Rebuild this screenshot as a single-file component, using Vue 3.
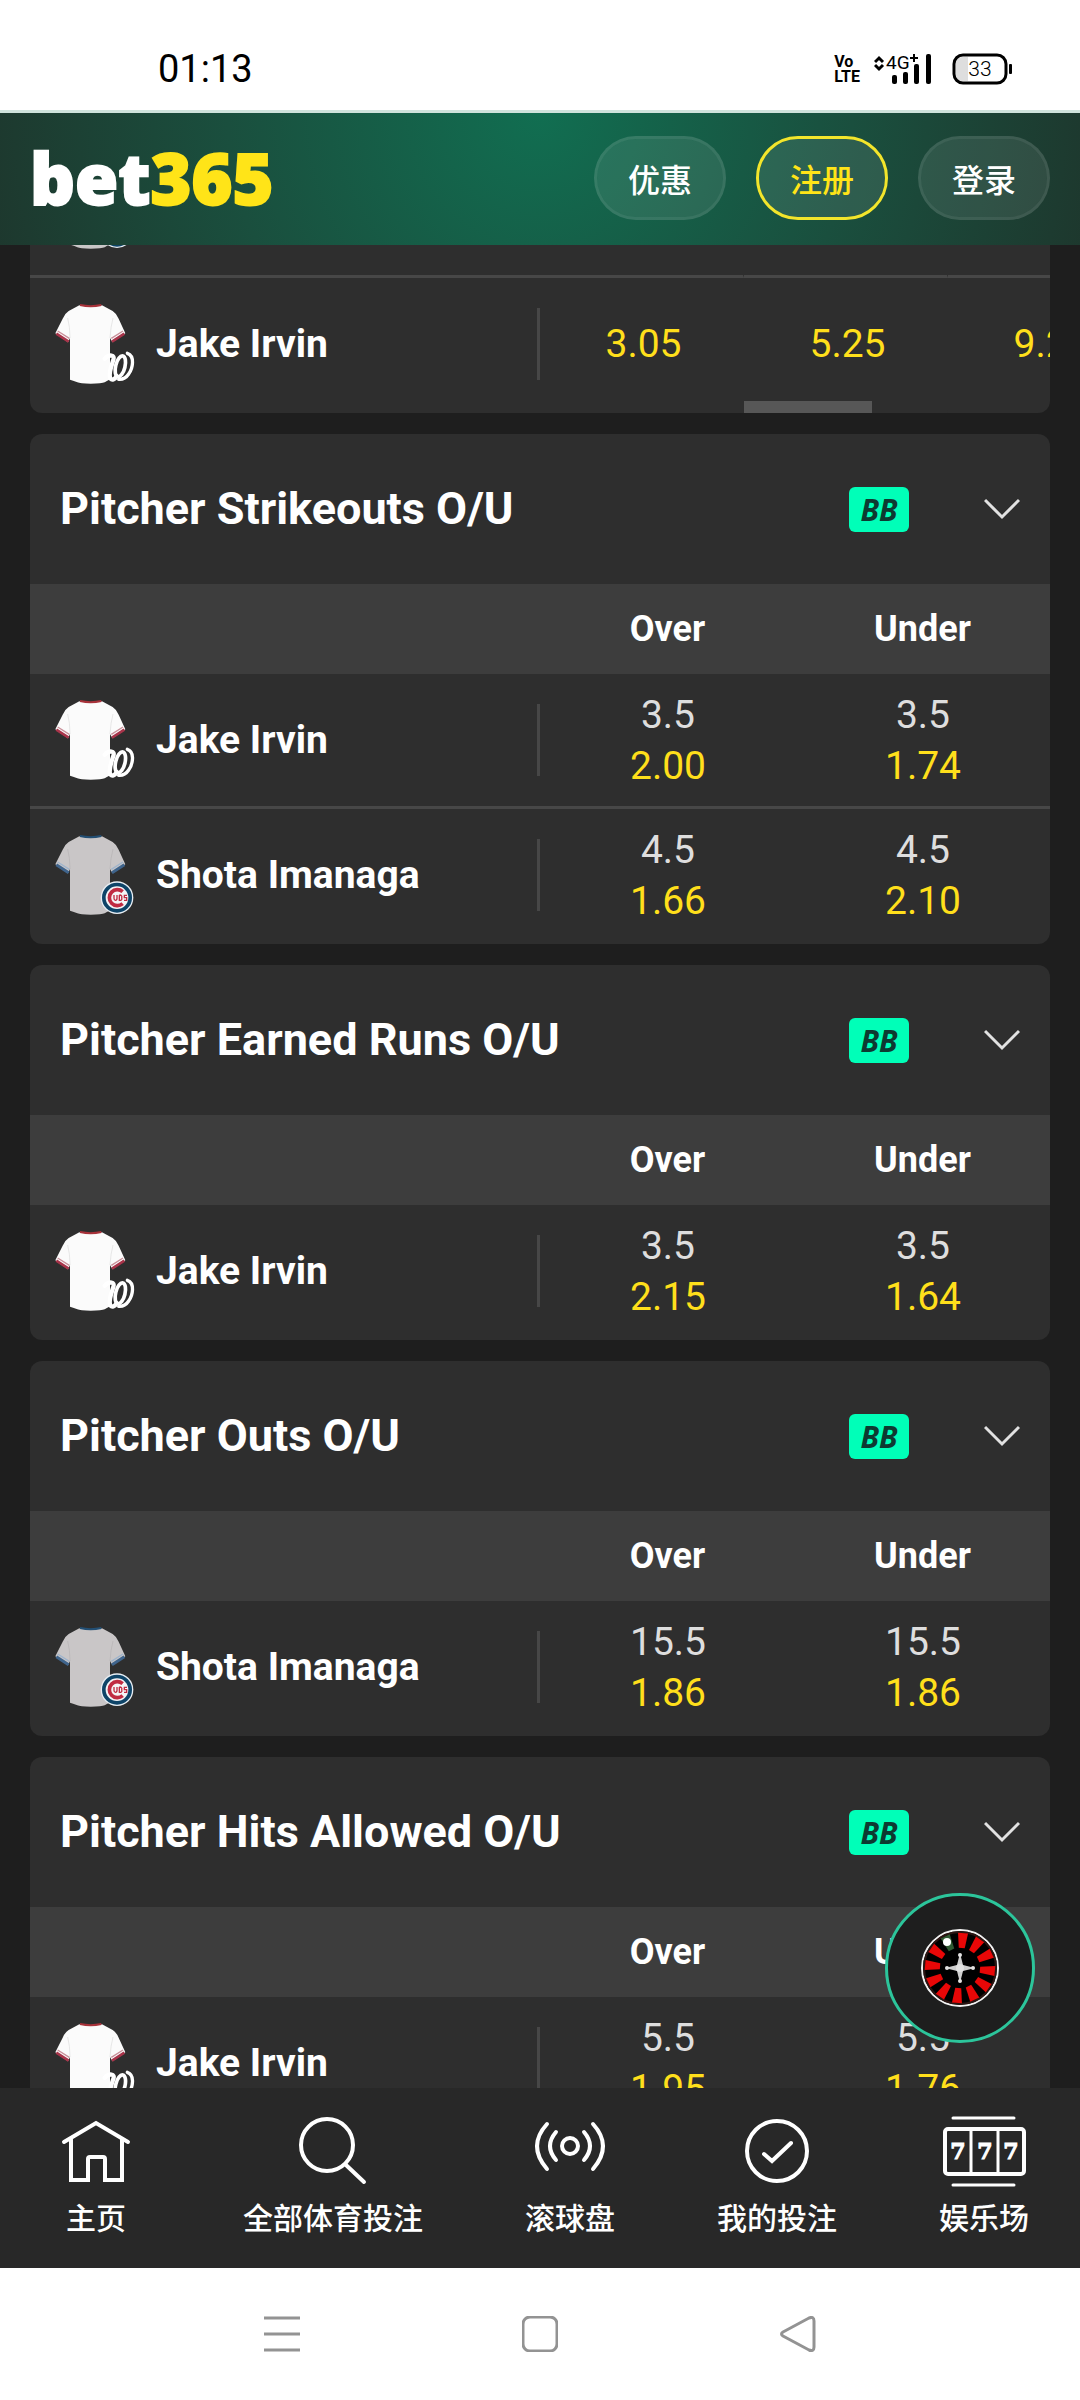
<script setup>
const markets = [
  {
    title: 'Pitcher Strikeouts O/U',
    rows: [
      { name: 'Jake Irvin', team: 'was', odds: [['3.5', '2.00'], ['3.5', '1.74']] },
      { name: 'Shota Imanaga', team: 'chc', odds: [['4.5', '1.66'], ['4.5', '2.10']] },
    ],
  },
  {
    title: 'Pitcher Earned Runs O/U',
    rows: [{ name: 'Jake Irvin', team: 'was', odds: [['3.5', '2.15'], ['3.5', '1.64']] }],
  },
  {
    title: 'Pitcher Outs O/U',
    rows: [{ name: 'Shota Imanaga', team: 'chc', odds: [['15.5', '1.86'], ['15.5', '1.86']] }],
  },
  {
    title: 'Pitcher Hits Allowed O/U',
    rows: [{ name: 'Jake Irvin', team: 'was', odds: [['5.5', '1.95'], ['5.5', '1.76']] }],
  },
]

// Upper table scrolls sideways, so its last column runs past the card edge.
// Its first row has scrolled up under the header and keeps only its kit.
const ladder = [
  { name: '', team: 'chc', odds: ['', '', ''] },
  { name: 'Jake Irvin', team: 'was', odds: ['3.05', '5.25', '9.25'] },
]

const columns = ['Over', 'Under']

const pockets = Array.from({ length: 12 }, (_, i) => i * 30 + 5)
</script>

<template>
  <div class="screen">
    <svg class="defs" width="0" height="0" aria-hidden="true">
      <defs>
        <path
          id="shirt"
          d="M82 10Q116 16 150 10L182 27Q193 34 200 50L220 94L181 121L174 108V232Q166 236 158 241Q150 245 116 245Q84 245 76 241Q66 236 54 233V108L48 121L10 94L32 50Q39 34 50 27Z"
        />
        <path id="seams" d="M47 48Q54 74 54 108M183 48Q176 74 174 108" />
        <path id="collar" d="M84 9Q116 16 148 9" />
        <path id="cuffs" d="M13 95L50 119M217 95L180 119" />
        <path id="stripes" d="M17 87L52 109M213 87L178 109" />
        <g id="was">
          <use href="#shirt" fill="#fbfbfb" />
          <use href="#seams" fill="none" stroke="#dcdcdc" stroke-width="2" />
          <use href="#collar" fill="none" stroke="#a8323a" stroke-width="6" />
          <use href="#cuffs" fill="none" stroke="#a8344a" stroke-width="8" />
          <use href="#stripes" fill="none" stroke="#c9909a" stroke-width="4" />
          <g fill="none" stroke="#fff" stroke-linecap="round">
            <path d="M158 170C172 156 190 158 184 174C178 192 170 212 174 228C180 238 190 230 194 222" stroke-width="13" />
            <ellipse cx="205" cy="193" rx="14" ry="32" transform="rotate(14 205 193)" stroke-width="11" />
            <path d="M226 154C250 162 242 200 230 216C222 228 212 233 200 232" stroke-width="10" />
          </g>
        </g>
        <g id="chc">
          <use href="#shirt" fill="#c9c6c7" />
          <use href="#seams" fill="none" stroke="#b5b2b4" stroke-width="2" />
          <use href="#collar" fill="none" stroke="#234f74" stroke-width="6" />
          <use href="#cuffs" fill="none" stroke="#3f648c" stroke-width="9" />
          <use href="#stripes" fill="none" stroke="#9fb4cc" stroke-width="4" />
          <circle cx="195" cy="194" r="49" fill="#e8eef4" />
          <circle cx="195" cy="194" r="45" fill="#0e4468" />
          <circle cx="195" cy="194" r="34" fill="#f4f4f6" />
          <path d="M212 176A24 24 0 1 0 212 212" fill="none" stroke="#c02b42" stroke-width="11" />
          <path
            d="M186 186V196Q186 202 190 202Q195 202 195 196V186M202 186V202H206Q211 201 209 194Q212 187 202 186M225 187H217V194H224V202H216"
            fill="none"
            stroke="#c02b42"
            stroke-width="4"
          />
        </g>
      </defs>
    </svg>

    <div class="status">
      <time class="clock">01:13</time>
      <div class="signals">
        <span class="volte"><span>Vo</span><span>LTE</span></span>
        <svg width="46" height="32" viewBox="0 0 46 32" role="img" aria-label="4G+">
          <g fill="none" stroke="#000" stroke-width="3">
            <path d="M1 9L5 5L9 9M1 12L5 16L9 12" />
            <path d="M36 5H44M40 1V9" stroke-width="2" />
          </g>
          <text x="12" y="16" class="net">4G</text>
          <rect x="18" y="22" width="5" height="9" rx="2" />
          <rect x="29" y="19" width="5" height="12" rx="2" />
          <rect x="40" y="11" width="5" height="20" rx="2" />
        </svg>
        <svg class="bar" width="5" height="32" viewBox="0 0 5 32" aria-hidden="true">
          <rect x="0" y="1" width="5" height="30" rx="2" />
        </svg>
        <svg width="60" height="32" viewBox="0 0 60 32" role="img" aria-label="33%">
          <path d="M10 4H16V28H10Q4 28 4 22V10Q4 4 10 4Z" fill="#dedede" />
          <rect x="2" y="2" width="52" height="28" rx="9" fill="none" stroke="#000" stroke-width="3" />
          <rect x="57" y="11" width="3" height="10" rx="1" />
          <text x="28" y="23" class="charge">33</text>
        </svg>
      </div>
    </div>

    <header class="top">
      <a href="#" class="logo">bet<span>365</span></a>
      <div class="actions">
        <button type="button" class="pill">优惠</button>
        <button type="button" class="pill join">注册</button>
        <button type="button" class="pill">登录</button>
      </div>
    </header>

    <main class="content">
      <div class="markets">
        <section class="card">
          <table class="grid ladder">
            <tbody>
              <tr v-for="(row, r) in ladder" :key="r">
                <th scope="row" class="player">
                  <svg class="kit" viewBox="0 0 252 252" aria-hidden="true"><use :href="'#' + row.team" /></svg>
                  <span>{{ row.name }}</span>
                  <i class="rule"></i>
                </th>
                <td v-for="(price, i) in row.odds" :key="i">
                  <button v-if="price" type="button" class="odd"><b>{{ price }}</b></button>
                </td>
              </tr>
            </tbody>
          </table>
          <div class="thumb"></div>
        </section>

        <section v-for="market in markets" :key="market.title" class="card">
          <div class="head">
            <h2>{{ market.title }}</h2>
            <span class="bb">BB</span>
            <button type="button" class="fold" :aria-label="market.title">
              <svg width="36" height="22" viewBox="0 0 36 22" aria-hidden="true">
                <path d="M1 2L18 19L35 2" fill="none" stroke="#e2e2e2" stroke-width="3" />
              </svg>
            </button>
          </div>
          <table class="grid">
            <thead>
              <tr>
                <td></td>
                <th v-for="c in columns" :key="c" scope="col">{{ c }}</th>
              </tr>
            </thead>
            <tbody>
              <tr v-for="row in market.rows" :key="row.name">
                <th scope="row" class="player">
                  <svg class="kit" viewBox="0 0 252 252" aria-hidden="true"><use :href="'#' + row.team" /></svg>
                  <span>{{ row.name }}</span>
                  <i class="rule"></i>
                </th>
                <td v-for="(o, i) in row.odds" :key="i">
                  <button type="button" class="odd"><span>{{ o[0] }}</span><b>{{ o[1] }}</b></button>
                </td>
              </tr>
            </tbody>
          </table>
        </section>
      </div>

      <button type="button" class="roulette" aria-label="Roulette">
        <svg width="78" height="78" viewBox="-39 -39 78 78" aria-hidden="true">
          <circle r="38" fill="#000" stroke="#f2f2f2" stroke-width="2" />
          <circle r="36" fill="none" stroke="#2b1512" stroke-width="2" />
          <path
            v-for="(a, i) in pockets"
            :key="a"
            :transform="`rotate(${a})`"
            d="M-5 -35H5L3 -20H-3Z"
            :fill="i === 11 ? '#2f5a32' : '#e80707'"
          />
          <circle cx="-13" cy="-26" r="4" fill="#fff" />
          <path d="M0 -15L3 -3L15 0L3 3L0 15L-3 3L-15 0L-3 -3Z" fill="#cfcfcf" />
          <g fill="#e2e2e2">
            <circle cy="-13" r="2" /><circle cy="13" r="2" /><circle cx="-13" r="2" /><circle cx="13" r="2" />
            <circle r="4" />
          </g>
        </svg>
      </button>
    </main>

    <nav class="tabs">
      <a href="#">
        <svg width="72" height="72" viewBox="0 0 72 72" aria-hidden="true">
          <path d="M4 27L36 8L68 27M11 24V65H28V44Q28 42 30 42H43Q45 42 45 44V65H62V24" />
        </svg>
        <span>主页</span>
      </a>
      <a href="#">
        <svg width="84" height="72" viewBox="0 0 84 72" aria-hidden="true">
          <circle cx="36" cy="30" r="26" />
          <path d="M55 50L73 67" />
        </svg>
        <span>全部体育投注</span>
      </a>
      <a href="#">
        <svg width="72" height="72" viewBox="0 0 72 72" aria-hidden="true">
          <circle cx="36" cy="31" r="8" />
          <path d="M22 17Q10 31 22 45M50 17Q62 31 50 45M13 9Q-7 31 13 54M59 9Q79 31 59 54" />
        </svg>
        <span>滚球盘</span>
      </a>
      <a href="#">
        <svg width="72" height="72" viewBox="0 0 72 72" aria-hidden="true">
          <circle cx="36" cy="36" r="30" />
          <path d="M23 39L31 46L50 28" />
        </svg>
        <span>我的投注</span>
      </a>
      <a href="#">
        <svg width="84" height="72" viewBox="0 0 84 72" aria-hidden="true">
          <rect x="3" y="14" width="79" height="45" rx="3" />
          <path d="M29 14V59M56 14V59M11 3H72M11 70H72" stroke-width="3" />
          <g class="sevens"><text x="16" y="44">7</text><text x="43" y="44">7</text><text x="69" y="44">7</text></g>
        </svg>
        <span>娱乐场</span>
      </a>
    </nav>

    <div class="system">
      <button type="button" aria-label="Recents">
        <svg width="36" height="36" viewBox="0 0 36 36"><path d="M0 2H36M0 18H36M0 34H36" /></svg>
      </button>
      <button type="button" aria-label="Home">
        <svg width="36" height="36" viewBox="0 0 36 36"><rect x="1" y="1" width="34" height="34" rx="7" /></svg>
      </button>
      <button type="button" aria-label="Back">
        <svg width="36" height="36" viewBox="0 0 36 36">
          <path d="M3 16L29 2Q34 0 34 5V31Q34 36 29 34L3 20Q0 18 3 16Z" />
        </svg>
      </button>
    </div>
  </div>
</template>

<style>
body {
  background: #1e1e1e;
}
</style>

<style scoped>
.screen {
  display: flex;
  flex-direction: column;
  height: 100vh;
  overflow: hidden;
  background: #1e1e1e;
  color: #fff;
  font-family: Roboto, "Noto Sans CJK SC", sans-serif;
}
.screen * {
  box-sizing: border-box;
}
.defs {
  position: absolute;
}
button {
  margin: 0;
  padding: 0;
  border: 0;
  background: none;
  color: inherit;
  font: inherit;
  cursor: pointer;
}
a {
  color: inherit;
  text-decoration: none;
}
svg {
  display: block;
  flex: none;
}

.status {
  display: flex;
  align-items: center;
  justify-content: space-between;
  flex: none;
  height: 113px;
  padding: 28px 68px 0 158px;
  border-bottom: 3px solid #cfe3dc;
  background: #fff;
  color: #000;
}
.clock {
  font-size: 38px;
}
.signals {
  display: flex;
  align-items: center;
}
.volte {
  display: flex;
  flex-direction: column;
  margin-right: 14px;
  font: 700 16px/15px "Liberation Sans Narrow", Roboto, sans-serif;
}
.net {
  font-size: 19px;
}
.bar {
  margin: 0 21px 0 6px;
}
.charge {
  font-size: 21px;
  font-weight: 300;
  text-anchor: middle;
}

.top {
  display: flex;
  align-items: center;
  justify-content: space-between;
  flex: none;
  height: 132px;
  padding: 0 30px 2px;
  background: radial-gradient(circle 600px at 50% 0, #116e51, #1a4f3e 52%, #1e342b);
}
.logo {
  font: 900 70px/80px "Noto Sans", "Open Sans", sans-serif;
  -webkit-text-stroke: 2px currentColor;
}
.logo span {
  color: #ffe418;
}
.actions {
  display: flex;
  gap: 30px;
}
.pill {
  width: 132px;
  height: 84px;
  border: 3px solid rgba(255, 255, 255, 0.15);
  border-radius: 42px;
  background: rgba(255, 255, 255, 0.09);
  background-clip: padding-box;
  font-size: 32px;
  font-weight: 500;
}
.pill.join {
  border-color: #f3e52c;
  color: #ffe418;
}

.content {
  position: relative;
  flex: 1;
  min-height: 0;
  overflow: hidden;
}
.markets {
  display: flex;
  flex-direction: column;
  gap: 21px;
  margin-top: -102px;
  padding: 0 30px;
}
.card {
  position: relative;
  overflow: hidden;
  border-radius: 12px;
  background: #2e2e2e;
}
.thumb {
  position: absolute;
  bottom: 0;
  left: 70%;
  width: 128px;
  height: 12px;
  background: #575757;
}
.head {
  display: flex;
  align-items: center;
  height: 150px;
  padding: 0 30px;
}
.head h2 {
  flex: 1;
  margin: 0;
  padding-bottom: 2px;
  font-size: 45px;
  font-weight: 700;
}
.bb {
  width: 60px;
  margin-right: 75px;
  border-radius: 6px;
  background: #00ffb8;
  color: #0d3a31;
  font: italic 700 30px/45px "Noto Sans", sans-serif;
  text-align: center;
}

.grid,
.grid thead,
.grid tbody {
  display: block;
}
.grid tr {
  display: grid;
  grid-template-columns: 50% 25% 25%;
}
.grid.ladder tr {
  grid-template-columns: 50% repeat(3, 20%);
}
.grid td,
.grid th {
  padding: 0;
}
.grid thead {
  background: #3d3d3d;
  font-size: 36px;
  line-height: 90px;
}
.grid tbody td,
.grid tbody th {
  display: flex;
  align-items: center;
  justify-content: center;
  height: 135px;
  border-bottom: 3px solid #474747;
}
.grid tbody td {
  padding: 1px 0 0 1px;
}
.grid.ladder tbody td {
  padding-left: 4px;
  border-right: 1px solid #2e2e2e;
}
.grid tbody tr:last-child > * {
  border-bottom-color: transparent;
}
.grid tbody .player {
  justify-content: flex-start;
  gap: 20px;
  padding-left: 22px;
  font-size: 39px;
  font-weight: 700;
}
.kit {
  width: 84px;
  height: 84px;
}
.rule {
  width: 3px;
  height: 72px;
  margin-left: auto;
  background: #474747;
}
.odd {
  display: flex;
  flex-direction: column;
  align-items: center;
  font-size: 39px;
  line-height: 51px;
}
.odd span {
  color: #dedede;
}
.odd b {
  color: #ffdf1b;
  font-weight: 400;
}

.roulette {
  position: absolute;
  right: 45px;
  bottom: 45px;
  display: flex;
  align-items: center;
  justify-content: center;
  width: 150px;
  height: 150px;
  border: 3px solid #2cc59b;
  border-radius: 50%;
  background: #1e1e1e;
}

.tabs {
  display: flex;
  justify-content: space-between;
  flex: none;
  height: 180px;
  padding: 27px 51px 0;
  background: #282828;
}
.tabs a {
  display: flex;
  flex-direction: column;
  align-items: center;
  gap: 14px;
  min-width: 90px;
  font-size: 30px;
  font-weight: 500;
  line-height: 36px;
}
.tabs svg {
  fill: none;
  stroke: #fff;
  stroke-width: 4px;
  stroke-linecap: round;
  overflow: visible;
}
.tabs path[stroke-width] {
  stroke-width: 3px;
}
.sevens {
  fill: #fff;
  stroke-width: 1px;
  font: 700 22px "DejaVu Serif", serif;
  text-anchor: middle;
}

.system {
  display: flex;
  align-items: center;
  justify-content: center;
  flex: none;
  gap: 222px;
  height: 132px;
  background: #fff;
}
.system svg {
  fill: none;
  stroke: #939393;
  stroke-width: 3px;
}
</style>
